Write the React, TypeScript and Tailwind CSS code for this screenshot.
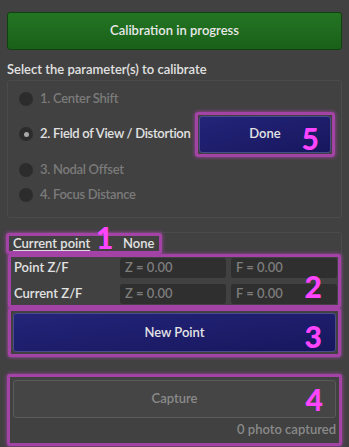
const font = { fontFamily: "Lato, 'Noto Sans', sans-serif" };

function Radio({ label, checked, disabled }: { label: string; checked?: boolean; disabled?: boolean }) {
  return (
    <div className="flex items-center gap-[7px] whitespace-nowrap">
      <span className="flex h-[14px] w-[14px] shrink-0 items-center justify-center rounded-full bg-[#2c2c2c]">
        {checked && <span className="h-[5px] w-[5px] rounded-full bg-[#a8a8a8]" />}
      </span>
      <span className={"tracking-[-0.3px] " + (disabled ? "text-[#7b7b7b]" : "text-[#e2e2e2]")}>{label}</span>
    </div>
  );
}

function Field({ text }: { text: string }) {
  return (
    <div className="flex h-[20px] w-[106px] items-center rounded-[3px] bg-[#2f2f2f] px-[5px] text-[#7d7d7d]">
      {text}
    </div>
  );
}

function Badge({ n, className }: { n: string; className: string }) {
  return (
    <span className={"absolute text-[30px] font-black leading-none text-[#ff45ff] " + className}>{n}</span>
  );
}

export default function App() {
  return (
    <div className="h-[447px] w-[349px] overflow-hidden bg-[#414141] text-[13px] font-semibold text-[#e2e2e2]" style={font}>
      <div className="flex flex-col px-[7px] pt-[12px]">
        <button className="flex h-[38px] items-center justify-center rounded-[3px] border border-[#0f420f] bg-gradient-to-b from-[#237523] to-[#1a601a] text-[#e8e8e8]">
          Calibration in progress
        </button>

        <div className="mt-[10px] leading-[18px]">Select the parameter(s) to calibrate</div>

        <div className="mt-[2px] flex h-[138px] flex-col rounded-[3px] border border-[#4b4b4b] pl-[11px] pt-[5px]">
          <div className="flex h-[25px] items-center">
            <Radio label="1. Center Shift" disabled />
          </div>
          <div className="flex h-[46px] items-center justify-between pr-[6px]">
            <Radio label="2. Field of View / Distortion" checked />
            <div className="relative shrink-0 rounded-[3px] border-[3px] border-[#a443a6] p-[1px] shadow-[0_0_4px_#a443a6]">
              <button className="flex h-[37px] w-[132px] items-center justify-center rounded-[3px] border border-[#4a4a8e] bg-gradient-to-br from-[#24247a] to-[#17175e] text-[#e4e4e4]">
                Done
              </button>
              <Badge n="5" className="right-[13px] top-[8px]" />
            </div>
          </div>
          <div className="flex h-[25px] items-center">
            <Radio label="3. Nodal Offset" disabled />
          </div>
          <div className="flex h-[26px] items-center">
            <Radio label="4. Focus Distance" disabled />
          </div>
        </div>

        <div className="relative mt-[14px] h-[126px] rounded-[3px] border border-[#4b4b4b]">
          <div className="relative -ml-[2px] flex h-[21px] w-[156px] items-center rounded-[2px] border-[3px] border-[#a443a6] pl-[4px] shadow-[0_0_4px_#a443a6]">
            <span className="w-[110px] underline underline-offset-2">Current point</span>
            <span>None</span>
            <Badge n="1" className="left-[87px] -top-[14px]" />
          </div>
          <div className="relative flex h-[54px] flex-col justify-center gap-[6px] rounded-[2px] border-[3px] border-[#a443a6] pl-[3px] pr-[1px] shadow-[0_0_4px_#a443a6]">
            <div className="flex items-center">
              <span className="w-[112px]">Point Z/F</span>
              <div className="flex gap-[5px]">
                <Field text="Z = 0.00" />
                <Field text="F = 0.00" />
              </div>
            </div>
            <div className="flex items-center">
              <span className="w-[112px]">Current Z/F</span>
              <div className="flex gap-[5px]">
                <Field text="Z = 0.00" />
                <Field text="F = 0.00" />
              </div>
            </div>
            <Badge n="2" className="right-[16px] top-[14px]" />
          </div>
          <div className="relative rounded-[2px] border-[3px] border-[#a443a6] p-[2px] shadow-[0_0_4px_#a443a6]">
            <button className="flex h-[39px] w-full items-center justify-center rounded-[3px] border border-[#4a4a8e] bg-gradient-to-br from-[#24247a] to-[#17175e] text-[#e4e4e4]">
              New Point
            </button>
            <Badge n="3" className="right-[16px] top-[10px]" />
          </div>
        </div>

        <div className="relative mt-[16px] rounded-[2px] border-[3px] border-[#a443a6] px-[3px] pt-[3px] shadow-[0_0_4px_#a443a6]">
          <button className="flex h-[38px] w-full items-center justify-center rounded-[3px] border border-[#5a5a5a] bg-[#454545] text-[#8a8a8a]">
            Capture
          </button>
          <div className="pb-[5px] pt-[3px] text-right leading-[17px] text-[#8a8a8a]">0 photo captured</div>
          <Badge n="4" className="right-[16px] top-[7px]" />
        </div>
      </div>
    </div>
  );
}
